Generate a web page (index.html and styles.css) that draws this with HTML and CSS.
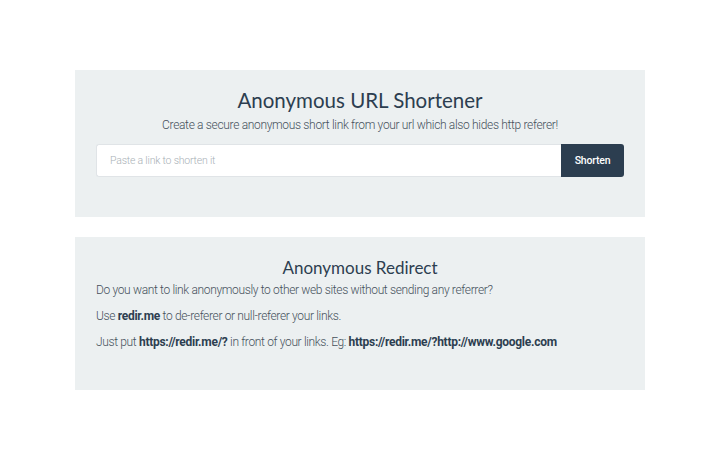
FILE: index.html
```html
<!DOCTYPE html>
<html lang="en">
<head>
  <meta charset="UTF-8" />
  <meta name="viewport" content="width=device-width, initial-scale=1.0"/>
  <title>redir.me - Anonymous URL Shortener</title>
  <link rel="stylesheet" href="styles.css">
</head>
<body>
  <div class="container">
    <section class="panel shortener">
      <h1>Anonymous URL Shortener</h1>
      <p class="lead">Create a secure anonymous short link from your url which also hides http referer!</p>
      <form class="short-form" onsubmit="return false;">
        <input type="text" placeholder="Paste a link to shorten it" />
        <button type="submit">Shorten</button>
      </form>
    </section>

    <section class="panel redirect">
      <h2>Anonymous Redirect</h2>
      <p>Do you want to link anonymously to other web sites without sending any referrer?</p>
      <p>Use <strong>redir.me</strong> to de-referer or null-referer your links.</p>
      <p>Just put <strong>https://redir.me/?</strong> in front of your links. Eg: <strong>https://redir.me/?http://www.google.com</strong></p>
    </section>
  </div>
</body>
</html>
```

FILE: styles.css
```css
body {
  margin: 0;
  background: #fff;
  font-family: Roboto, 'Liberation Sans', sans-serif;
  font-weight: 300;
  color: #46515c;
}
.container {
  width: 570px;
  margin: 70px auto 0;
}
.panel {
  background: #ecf0f1;
  padding: 0 21px;
  margin-bottom: 20px;
}
.shortener {
  height: 147px;
  padding-top: 17px;
  box-sizing: border-box;
}
h1, h2 {
  font-family: Lato, 'Open Sans', sans-serif;
  font-weight: 400;
  color: #2c3e50;
  text-align: center;
  margin: 0;
}
h1 { font-size: 20.5px; line-height: 26px; }
h2 { font-size: 17px; line-height: 22px; }
.lead {
  text-align: center;
  font-size: 12px;
  letter-spacing: -0.33px;
  margin: 5px 0 12px;
}
.short-form {
  display: flex;
}
.short-form input {
  flex: 1;
  height: 33px;
  box-sizing: border-box;
  border: 1px solid #e0e4e7;
  border-right: none;
  border-radius: 3px 0 0 3px;
  padding: 0 13px;
  font-family: Roboto, sans-serif;
  font-weight: 300;
  font-size: 10.5px;
  letter-spacing: -0.2px;
  color: #333;
}
.short-form input::placeholder { color: #a9b0b6; }
.short-form button {
  width: 63px;
  height: 33px;
  border: none;
  border-radius: 0 3px 3px 0;
  background: #2c3e50;
  color: #fff;
  font-family: Roboto, sans-serif;
  font-weight: 500;
  font-size: 10.5px;
  letter-spacing: -0.2px;
}
.redirect {
  height: 153px;
  padding-top: 20px;
  box-sizing: border-box;
}
.redirect p {
  font-size: 12px;
  letter-spacing: -0.35px;
  line-height: 16px;
  margin: 0 0 10px;
}
.redirect h2 { margin-bottom: 3px; }
strong { font-weight: 700; color: #2c3e50; letter-spacing: -0.28px; }
```
